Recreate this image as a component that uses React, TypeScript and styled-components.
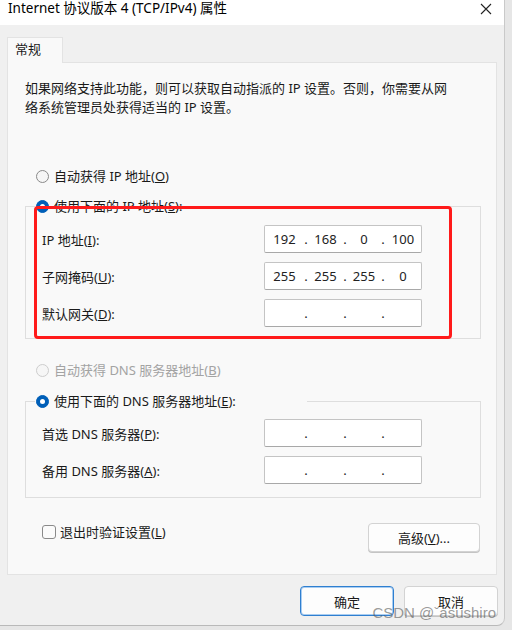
import React from "react";
import styled, { createGlobalStyle } from "styled-components";

const Global = createGlobalStyle`
  html, body { margin: 0; padding: 0; background: #e6e6e6; }
  body { font-family: "Noto Sans", "Noto Sans CJK SC", sans-serif; font-size: 13px; color: #1a1a1a; }
  * { box-sizing: border-box; }
`;

const Window = styled.div`
  position: relative;
  width: 505px;
  height: 626px;
  background: #f0f0f0;
  border-right: 1px solid #c9c9c9;
  border-bottom: 1px solid #b9b9b9;
  border-radius: 0 0 8px 0;
  display: flex;
  flex-direction: column;
`;

const TitleBar = styled.div`
  height: 25px;
  background: #ffffff;
  display: flex;
  align-items: flex-start;
  justify-content: space-between;
  padding: 0 12px 0 8px;
`;

const Title = styled.div`
  font-size: 13.5px;
  line-height: 17px;
  color: #000;
`;

const CloseBtn = styled.div`
  width: 12px;
  height: 12px;
  margin-top: 3px;
  display: flex;
`;

const Body = styled.div`
  padding: 12px 0 0 7px;
  display: flex;
  flex-direction: column;
`;

const Tab = styled.div`
  position: relative;
  z-index: 1;
  width: 56px;
  height: 26px;
  margin-bottom: -1px;
  background: #f9f9f9;
  border: 1px solid #e3e3e3;
  border-bottom: none;
  padding: 2px 0 0 7px;
  font-size: 13px;
  line-height: 18px;
`;

const Panel = styled.div`
  position: relative;
  width: 490px;
  height: 513px;
  background: #f9f9f9;
  border: 1px solid #e3e3e3;
  padding: 16px 0 0 17px;
  display: flex;
  flex-direction: column;
`;

const Desc = styled.div`
  font-size: 13px;
  line-height: 19px;
  width: 440px;
`;

const RadioRow = styled.label<{ $mt: number; $disabled?: boolean }>`
  display: flex;
  align-items: center;
  height: 20px;
  margin-top: ${(p) => p.$mt}px;
  margin-left: 10px;
  gap: 5px;
  color: ${(p) => (p.$disabled ? "#a3a3a3" : "#1a1a1a")};
  line-height: 20px;
`;

const RadioDot = styled.span<{ $checked?: boolean; $disabled?: boolean }>`
  width: 13px;
  height: 13px;
  margin-left: 1px;
  border-radius: 50%;
  flex: none;
  background: ${(p) => (p.$checked ? "#005fb8" : "#f6f6f6")};
  border: 1px solid ${(p) => (p.$checked ? "#005fb8" : p.$disabled ? "#cdcdcd" : "#8a8a8a")};
  display: flex;
  align-items: center;
  justify-content: center;
  &::after {
    content: "";
    width: 5px;
    height: 5px;
    border-radius: 50%;
    background: #fff;
    display: ${(p) => (p.$checked ? "block" : "none")};
  }
`;

const Group = styled.fieldset<{ $mt: number; $pt: number; $pb: number }>`
  margin: ${(p) => p.$mt}px 0 0 0;
  width: 456px;
  min-width: 0;
  border: 1px solid #dedede;
  padding: ${(p) => p.$pt}px 0 ${(p) => p.$pb}px 16px;
  display: flex;
  flex-direction: column;
  gap: 9px;
`;

const Legend = styled.legend`
  padding: 0;
  margin-left: -7px;
  width: 272px;
  height: 20px;
  display: flex;
  align-items: center;
  gap: 5px;
  line-height: 20px;
`;

const FieldRow = styled.div`
  display: flex;
  align-items: center;
  height: 28px;
`;

const FieldLabel = styled.div`
  width: 222px;
  font-size: 13px;
`;

const IpBox = styled.div`
  width: 158px;
  height: 28px;
  background: #fff;
  border: 1px solid #c4c4c4;
  border-bottom-color: #a8a8a8;
  border-radius: 2px;
  display: grid;
  grid-template-columns: 39px 4px 35px 4px 34px 4px 36px;
  align-items: center;
  font-size: 13px;
  color: #222;
`;

const Octet = styled.span`
  text-align: center;
`;

const Dot = styled.span`
  text-align: center;
`;

const BottomRow = styled.div`
  margin-top: 25px;
  padding: 0 16px 0 17px;
  display: flex;
  align-items: flex-start;
  justify-content: space-between;
`;

const CheckLabel = styled.label`
  display: flex;
  align-items: center;
  gap: 4px;
  height: 18px;
  line-height: 18px;
`;

const CheckBox = styled.span`
  width: 14px;
  height: 14px;
  border: 1px solid #8a8a8a;
  border-radius: 3px;
  background: #fbfbfb;
`;

const Button = styled.button<{ $w: number; $h: number; $primary?: boolean }>`
  width: ${(p) => p.$w}px;
  height: ${(p) => p.$h}px;
  background: #fdfdfd;
  border: 1px solid ${(p) => (p.$primary ? "#2f7fd0" : "#d3d3d3")};
  box-shadow: ${(p) => (p.$primary ? "inset 0 0 0 1px #a9cdf1" : "0 1px 0 #c4c4c4")};
  border-radius: 4px;
  font-family: "Noto Sans", "Noto Sans CJK SC", sans-serif;
  font-size: 13px;
  color: #1a1a1a;
  padding: 0;
`;

const Footer = styled.div`
  margin-top: 11px;
  padding-right: 6px;
  display: flex;
  justify-content: flex-end;
  gap: 10px;
`;

const Annotation = styled.div`
  position: absolute;
  left: 26px;
  top: 143px;
  width: 418px;
  height: 133px;
  border: 3px solid #ff1a1a;
  border-radius: 4px;
  pointer-events: none;
`;

const Watermark = styled.div`
  position: absolute;
  right: 8px;
  bottom: 4px;
  font-family: "Liberation Sans", Arial, sans-serif;
  font-size: 15px;
  line-height: 17px;
  color: rgba(90, 90, 90, 0.62);
  pointer-events: none;
`;

const IpInput: React.FC<{ v?: string[] }> = ({ v = ["", "", "", ""] }) => (
  <IpBox>
    <Octet>{v[0]}</Octet>
    <Dot>.</Dot>
    <Octet>{v[1]}</Octet>
    <Dot>.</Dot>
    <Octet>{v[2]}</Octet>
    <Dot>.</Dot>
    <Octet>{v[3]}</Octet>
  </IpBox>
);

export default function App() {
  return (
    <>
      <Global />
      <Window>
        <TitleBar>
          <Title>Internet 协议版本 4 (TCP/IPv4) 属性</Title>
          <CloseBtn>
            <svg width="12" height="12" viewBox="0 0 12 12">
              <path d="M1 1 L11 11 M11 1 L1 11" stroke="#222" strokeWidth="1.1" />
            </svg>
          </CloseBtn>
        </TitleBar>
        <Body>
          <Tab>常规</Tab>
          <Panel>
            <Desc>
              如果网络支持此功能，则可以获取自动指派的 IP 设置。否则，你需要从网
              <br />
              络系统管理员处获得适当的 IP 设置。
            </Desc>
            <RadioRow $mt={49}>
              <RadioDot />
              <span>
                自动获得 IP 地址(<u>O</u>)
              </span>
            </RadioRow>
            <Group $mt={10} $pt={9} $pb={11}>
              <Legend>
                <RadioDot $checked />
                <span>
                  使用下面的 IP 地址(<u>S</u>):
                </span>
              </Legend>
              <FieldRow>
                <FieldLabel>
                  IP 地址(<u>I</u>):
                </FieldLabel>
                <IpInput v={["192", "168", "0", "100"]} />
              </FieldRow>
              <FieldRow>
                <FieldLabel>
                  子网掩码(<u>U</u>):
                </FieldLabel>
                <IpInput v={["255", "255", "255", "0"]} />
              </FieldRow>
              <FieldRow>
                <FieldLabel>
                  默认网关(<u>D</u>):
                </FieldLabel>
                <IpInput />
              </FieldRow>
            </Group>
            <RadioRow $mt={21} $disabled>
              <RadioDot $disabled />
              <span>
                自动获得 DNS 服务器地址(<u>B</u>)
              </span>
            </RadioRow>
            <Group $mt={11} $pt={8} $pb={13}>
              <Legend>
                <RadioDot $checked />
                <span>
                  使用下面的 DNS 服务器地址(<u>E</u>):
                </span>
              </Legend>
              <FieldRow>
                <FieldLabel>
                  首选 DNS 服务器(<u>P</u>):
                </FieldLabel>
                <IpInput />
              </FieldRow>
              <FieldRow>
                <FieldLabel>
                  备用 DNS 服务器(<u>A</u>):
                </FieldLabel>
                <IpInput />
              </FieldRow>
            </Group>
            <BottomRow>
              <CheckLabel>
                <CheckBox />
                <span>
                  退出时验证设置(<u>L</u>)
                </span>
              </CheckLabel>
              <Button $w={112} $h={29}>
                高级(<u>V</u>)...
              </Button>
            </BottomRow>
            <Annotation />
          </Panel>
          <Footer>
            <Button $w={94} $h={30} $primary>
              确定
            </Button>
            <Button $w={94} $h={30}>
              取消
            </Button>
          </Footer>
        </Body>
        <Watermark>CSDN @ˇasushiro</Watermark>
      </Window>
    </>
  );
}
